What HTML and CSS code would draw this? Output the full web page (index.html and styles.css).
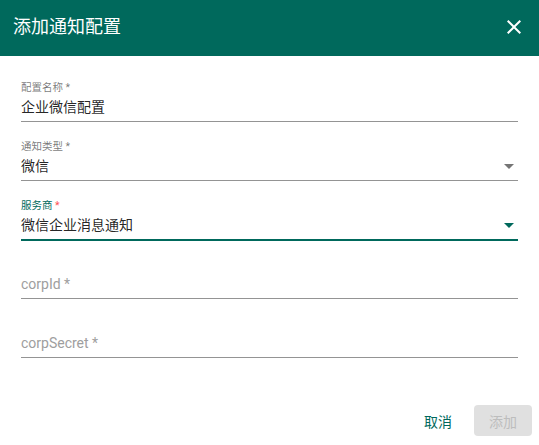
FILE: index.html
```html
<!DOCTYPE html>
<html lang="zh">
<head>
<meta charset="utf-8">
<title>添加通知配置</title>
<link rel="stylesheet" href="styles.css">
</head>
<body>
<div class="dialog">
  <div class="header">
    <span class="title">添加通知配置</span>
    <svg class="close" viewBox="0 0 24 24" width="24" height="24"><path fill="#fff" d="M19 6.41L17.59 5 12 10.59 6.41 5 5 6.41 10.59 12 5 17.59 6.41 19 12 13.41 17.59 19 19 17.59 13.41 12z"/></svg>
  </div>
  <div class="form">
    <div class="field">
      <div class="label">配置名称 *</div>
      <div class="row"><span class="value">企业微信配置</span></div>
    </div>
    <div class="field">
      <div class="label">通知类型 *</div>
      <div class="row"><span class="value">微信</span><svg class="arrow" viewBox="0 0 10 5" width="10" height="5"><path d="M0 0l5 5 5-5z" fill="#757575"/></svg></div>
    </div>
    <div class="field active">
      <div class="label">服务商 <span class="req">*</span></div>
      <div class="row"><span class="value">微信企业消息通知</span><svg class="arrow" viewBox="0 0 10 5" width="10" height="5"><path d="M0 0l5 5 5-5z" fill="#00695c"/></svg></div>
    </div>
    <div class="field empty">
      <div class="row"><span class="placeholder">corpId *</span></div>
    </div>
    <div class="field empty">
      <div class="row"><span class="placeholder">corpSecret *</span></div>
    </div>
  </div>
  <div class="actions">
    <button class="btn text">取消</button>
    <button class="btn disabled">添加</button>
  </div>
</div>
</body>
</html>
```
FILE: styles.css
```css
* { box-sizing: border-box; }
html, body { margin: 0; padding: 0; background: #fff; }
body {
  font-family: Roboto, "Noto Sans CJK SC", sans-serif;
  color: rgba(0,0,0,.87);
}
.dialog {
  width: 539px;
  height: 443px;
  display: flex;
  flex-direction: column;
  background: #fff;
  box-shadow: 0 1px 0 #8c8c8c;
}
.header {
  height: 56px;
  background: #00695c;
  display: flex;
  align-items: center;
  justify-content: space-between;
  padding: 0 13px 0 13px;
}
.title {
  color: #fff;
  font-size: 18px;
  line-height: 24px;
  margin-top: -2px;
}
.close { display: block; margin-top: -3px; }
.form {
  padding: 25px 21px 0 21px;
}
.field {
  margin-bottom: 18px;
  border-bottom: 1px solid #949494;
}
.field.active {
  border-bottom: 2px solid #00695c;
  margin-bottom: 17px;
}
.label {
  font-size: 10.5px;
  line-height: 14px;
  color: rgba(0,0,0,.54);
  margin-bottom: 2px;
}
.field.active .label { color: #00695c; }
.req { color: #ff5252; }
.row {
  height: 24px;
  padding-bottom: 4px;
  display: flex;
  align-items: center;
  justify-content: space-between;
  font-size: 14px;
  line-height: 20px;
}
.field.empty { padding-top: 16px; }
.placeholder { color: #9e9e9e; }
.arrow { display: block; margin-right: 4px; }
.actions {
  margin-top: auto;
  display: flex;
  justify-content: flex-end;
  gap: 7px;
  padding: 0 7px 7px 0;
}
.btn {
  width: 58px;
  height: 31px;
  border: none;
  border-radius: 4px;
  font-family: Roboto, "Noto Sans CJK SC", sans-serif;
  font-size: 14px;
  padding: 0;
  background: transparent;
}
.btn.text { color: #00695c; }
.btn.disabled { background: #e0e0e0; color: #bdbdbd; }
```
